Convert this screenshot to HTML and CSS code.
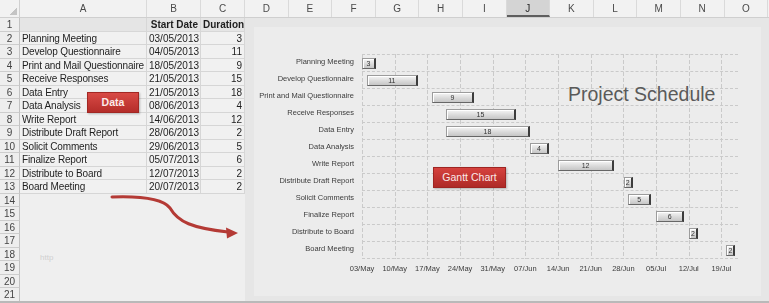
FILE: index.html
```html
<!DOCTYPE html>
<html lang="en">
<head>
  <meta charset="UTF-8" />
  <meta name="viewport" content="width=device-width, initial-scale=1.0"/>
  <title>Project Schedule - Gantt Chart</title>
  <link rel="stylesheet" href="styles.css">
</head>
<body>
  <div class="sheet">
    <div class="col-heads" id="colHeads">
      <div class="corner"></div>
    </div>

    <div class="sheet-body">
      <div class="table-wrap">
        <div class="table" id="taskTable"></div>
        <div class="data-btn">Data</div>
        <div class="watermark">http</div>
      </div>

      <div class="canvas">
        <div class="chart">
          <div class="chart-body">
            <div class="labels" id="chartLabels"></div>
            <div class="plot" id="chartPlot"></div>
          </div>
          <div class="axis" id="chartAxis"></div>
          <div class="chart-title">Project Schedule</div>
          <div class="gantt-btn">Gantt Chart</div>
        </div>
      </div>
    </div>

    <svg class="arrow" width="769" height="303" viewBox="0 0 769 303">
      <path d="M112 197 C140 196 163 199 170 208 C178 222 192 228 228 232" fill="none" stroke="#b43a35" stroke-width="3" stroke-linecap="round"/>
      <polygon points="238,233 226,227.5 227,238.5" fill="#b43a35"/>
    </svg>
  </div>

  <script>
    const tasks = [
      ["Planning Meeting", "03/05/2013", 3],
      ["Develop Questionnaire", "04/05/2013", 11],
      ["Print and Mail Questionnaire", "18/05/2013", 9],
      ["Receive Responses", "21/05/2013", 15],
      ["Data Entry", "21/05/2013", 18],
      ["Data Analysis", "08/06/2013", 4],
      ["Write Report", "14/06/2013", 12],
      ["Distribute Draft Report", "28/06/2013", 2],
      ["Solicit Comments", "29/06/2013", 5],
      ["Finalize Report", "05/07/2013", 6],
      ["Distribute to Board", "12/07/2013", 2],
      ["Board Meeting", "20/07/2013", 2]
    ];

    const start = new Date(2013, 4, 3);
    const pxPerDay = 4.669;
    const months = ["Jan","Feb","Mar","Apr","May","Jun","Jul","Aug","Sep","Oct","Nov","Dec"];

    function parseDate(s) {
      const [d, m, y] = s.split("/").map(Number);
      return new Date(y, m - 1, d);
    }

    // column headers
    const heads = document.getElementById("colHeads");
    "ABCDEFGHIJKLMNO".split("").forEach(letter => {
      const h = document.createElement("div");
      h.className = "ch ch-" + letter.toLowerCase();
      if (letter === "J") h.classList.add("selected");
      h.textContent = letter;
      heads.appendChild(h);
    });

    // worksheet rows
    const table = document.getElementById("taskTable");
    for (let r = 1; r <= 21; r++) {
      let cells;
      let kind = "blank";
      if (r === 1) {
        cells = ["", "Start Date", "Duration"];
        kind = "hdr";
      } else if (r <= 13) {
        const t = tasks[r - 2];
        cells = [t[0], t[1], t[2]];
        kind = "data";
      } else {
        cells = ["", "", ""];
      }
      const num = document.createElement("div");
      num.className = "rh";
      num.textContent = r;
      table.appendChild(num);
      cells.forEach((c, i) => {
        const cell = document.createElement("div");
        cell.className = "cell " + kind + (i > 0 ? " num" : "");
        cell.textContent = c;
        table.appendChild(cell);
      });
    }

    // chart
    const labels = document.getElementById("chartLabels");
    const plot = document.getElementById("chartPlot");
    tasks.forEach(t => {
      const lab = document.createElement("div");
      lab.className = "label";
      lab.textContent = t[0];
      labels.appendChild(lab);

      const days = Math.round((parseDate(t[1]) - start) / 86400000);
      const row = document.createElement("div");
      row.className = "prow";
      row.innerHTML = `<div class="bar" style="margin-left:${(days * pxPerDay).toFixed(1)}px;width:${(t[2] * pxPerDay).toFixed(1)}px">${t[2]}</div>`;
      plot.appendChild(row);
    });

    const axis = document.getElementById("chartAxis");
    for (let w = 0; w < 12; w++) {
      const d = new Date(2013, 4, 3 + w * 7);
      const tick = document.createElement("div");
      tick.className = "tick";
      tick.textContent = String(d.getDate()).padStart(2, "0") + "/" + months[d.getMonth()];
      axis.appendChild(tick);
    }
  </script>
</body>
</html>
```

FILE: styles.css
```css
body {
  margin: 0;
  background: #d9d9d9;
  font-family: "Liberation Sans", Arial, sans-serif;
  color: #222;
}

.sheet {
  position: relative;
  width: 769px;
  height: 301px;
  overflow: hidden;
  background: #e6e6e6;
  border-bottom: 2px solid #b9b9b9;
}

/* column header row */
.col-heads {
  display: flex;
  height: 18px;
  background: #f2f2f2;
  border-bottom: 1px solid #cfcfcf;
  box-sizing: border-box;
  filter: grayscale(1);
}

.corner {
  width: 20px;
  flex-shrink: 0;
  border-right: 1px solid #d0d0d0;
  box-sizing: border-box;
  background: linear-gradient(135deg, transparent 55%, #c4c4c4 55%) no-repeat right 2px bottom 2px / 8px 8px;
}

.ch {
  width: 43.6px;
  flex-shrink: 0;
  box-sizing: border-box;
  border-right: 1px solid #dadada;
  font-size: 10px;
  line-height: 17px;
  text-align: center;
  color: #4a4a4a;
}

.ch-a { width: 127px; }
.ch-b { width: 54px; }
.ch-c { width: 44px; }

.ch.selected {
  background: #d4d4d4;
  border-bottom: 2px solid #217346;
  color: #222;
}

.sheet-body {
  display: flex;
}

/* task table */
.table-wrap {
  position: relative;
  width: 245px;
  flex-shrink: 0;
}

.table {
  display: grid;
  grid-template-columns: 20px 127px 54px 44px;
  grid-auto-rows: 13.5px;
  background: #efefef;
  filter: grayscale(1);
}

.rh {
  background: #eeeeee;
  border-right: 1px solid #c2c2c2;
  border-bottom: 1px solid #cdcdcd;
  box-sizing: border-box;
  font-size: 10px;
  line-height: 13px;
  text-align: center;
  color: #444;
}

.cell {
  font-size: 10px;
  line-height: 13px;
  padding: 0 2px;
  white-space: nowrap;
  overflow: hidden;
  box-sizing: border-box;
  letter-spacing: -0.15px;
  color: #1e1e1e;
}

.cell.data {
  background: #f1f1f1;
  border-right: 1px solid #d6d6d6;
  border-bottom: 1px solid #d6d6d6;
}

.cell.hdr {
  background: #dce6f1;
  border-right: 1px solid #d0d8e2;
  border-bottom: 1px solid #d0d8e2;
  font-weight: bold;
}

.cell.num {
  text-align: right;
  letter-spacing: 0;
}

.data-btn {
  position: absolute;
  z-index: 1;
  left: 87px;
  top: 74px;
  width: 52px;
  height: 21px;
  background: linear-gradient(#d84a45, #b52d2a);
  border: 1px solid #a22824;
  box-sizing: border-box;
  box-shadow: 1px 1px 2px rgba(0, 0, 0, 0.25);
  color: #fbeaea;
  font-size: 10.5px;
  font-weight: bold;
  line-height: 19px;
  text-align: center;
}

.watermark {
  position: absolute;
  z-index: 1;
  left: 40px;
  top: 235px;
  font-size: 8px;
  color: #cfcfcf;
}

/* chart */
.canvas {
  flex: 1;
  padding: 9px 8px 0 9px;
}

.chart {
  position: relative;
  height: 269px;
  background: #ececec;
  padding-top: 27px;
  box-sizing: border-box;
}

.chart-title {
  position: absolute;
  z-index: 1;
  left: 314px;
  top: 57px;
  font-size: 19.5px;
  line-height: 20px;
  color: #5a5a5a;
}

.gantt-btn {
  position: absolute;
  z-index: 1;
  left: 179px;
  top: 140px;
  width: 73px;
  height: 21px;
  background: linear-gradient(#d6423e, #ae2a27);
  border: 1px solid #9e2522;
  box-sizing: border-box;
  box-shadow: 1px 1px 2px rgba(0, 0, 0, 0.25);
  color: #fbeaea;
  font-size: 10.5px;
  line-height: 19px;
  text-align: center;
}

.chart-body {
  display: flex;
  gap: 8px;
  filter: grayscale(1);
}

.labels {
  width: 100px;
  display: flex;
  flex-direction: column;
}

.label {
  height: 17px;
  line-height: 16px;
  font-size: 7.5px;
  text-align: right;
  color: #3c3c3c;
  white-space: nowrap;
}

.plot {
  width: 376px;
  background:
    repeating-linear-gradient(to bottom, transparent 0 4px, #ececec 4px 6px),
    repeating-linear-gradient(to right, #cacaca 0 1px, transparent 1px 32.68px);
}

.prow {
  display: flex;
  height: 17px;
  box-sizing: border-box;
  border-top: 1px dashed #cacaca;
}

.prow:last-child {
  height: 18px;
  border-bottom: 1px dashed #cacaca;
}

.bar {
  flex-shrink: 0;
  height: 11px;
  margin-top: 3px;
  box-sizing: border-box;
  background: linear-gradient(#f6f6f6, #dadada 55%, #c6c6c6);
  border: 1px solid #9c9c9c;
  border-right: 2px solid #3c3c3c;
  border-bottom-color: #666;
  box-shadow: inset 1px 1px 0 #fff;
  font-size: 7px;
  line-height: 9px;
  text-align: center;
  color: #333;
}

.axis {
  display: flex;
  margin: 5px 0 0 91.7px;
  filter: grayscale(1);
}

.tick {
  width: 32.68px;
  flex-shrink: 0;
  font-size: 7.5px;
  line-height: 10px;
  text-align: center;
  color: #3c3c3c;
  white-space: nowrap;
}

.arrow {
  position: absolute;
  z-index: 2;
  left: 0;
  top: 0;
  pointer-events: none;
}
```
